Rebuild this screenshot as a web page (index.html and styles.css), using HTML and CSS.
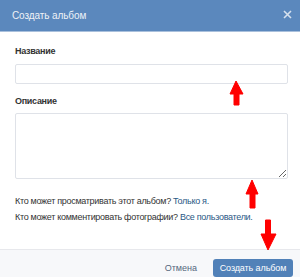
FILE: index.html
```html
<!DOCTYPE html>
<html lang="ru">
  <head>
    <meta charset="UTF-8" />
    <meta name="viewport" content="width=device-width, initial-scale=1.0" />
    <title>Создать альбом</title>
    <link rel="stylesheet" href="styles.css">
  </head>
  <body>
    <div class="box">
      <div class="box-header">
        <span class="box-title">Создать альбом</span>
        <svg class="box-close" width="9" height="9" viewBox="0 0 9 9">
          <path d="M1 1L8 8M8 1L1 8" stroke="#fff" stroke-opacity="0.75" stroke-width="1.6" />
        </svg>
      </div>

      <div class="box-body">
        <div class="label">Название</div>
        <input class="field" type="text" />

        <div class="label label-second">Описание</div>
        <textarea class="field area"></textarea>

        <div class="privacy">
          Кто может просматривать этот альбом? <a href="#">Только я.</a>
        </div>
        <div class="privacy">
          Кто может комментировать фотографии? <a href="#">Все пользователи.</a>
        </div>
      </div>

      <div class="box-footer">
        <button class="btn-cancel">Отмена</button>
        <button class="btn-create">Создать альбом</button>
      </div>

      <!-- red arrows drawn over the screenshot -->
      <svg class="arrows" width="300" height="277" viewBox="0 0 300 277">
        <path d="M236 81L243 94L239 94L239 105L234 105L234 94L230 94Z" fill="#f00" stroke="#f00" stroke-linejoin="round" />
        <path d="M252 180L258 194L255 194L255 208L250 208L250 194L246 194Z" fill="#f00" stroke="#f00" stroke-linejoin="round" />
        <path d="M268 250L276 234L270.5 234L270.5 220L265.5 220L265.5 234L261 234Z" fill="#f00" stroke="#f00" stroke-linejoin="round" />
      </svg>
    </div>
  </body>
</html>
```

FILE: styles.css
```css
body {
  margin: 0;
  font-family: "Liberation Sans", Arial, sans-serif;
  background: #fff;
  color: #222;
}
.box {
  position: relative;
  width: 300px;
  height: 277px;
  overflow: hidden;
}
.box-header {
  height: 31px;
  background: #5b88bd;
  border-bottom: 1px solid #a9c0dc;
  display: flex;
  align-items: center;
  justify-content: space-between;
  padding: 0 8px 0 12px;
}
.box-title {
  color: #eef2f7;
  font-size: 10px;
  letter-spacing: -0.1px;
}
.box-close {
  margin-bottom: 2px;
}
.box-body {
  padding: 12px 12px 0 15px;
}
.label {
  font-size: 9px;
  font-weight: bold;
  letter-spacing: -0.3px;
  color: #333;
  line-height: 14px;
  margin-bottom: 6px;
}
.label-second {
  margin-top: 10px;
  margin-bottom: 5px;
}
.field {
  display: block;
  box-sizing: border-box;
  width: 273px;
  height: 20px;
  margin: 0;
  border: 1px solid #dfe2e8;
  border-radius: 2px;
  background: #fff;
  font-family: inherit;
}
.area {
  height: 66px;
  resize: vertical;
}
.privacy {
  font-size: 9px;
  letter-spacing: -0.3px;
  line-height: 16px;
  color: #333;
}
.area + .privacy {
  margin-top: 14px;
}
.privacy a {
  color: #2a5885;
  text-decoration: none;
}
.box-footer {
  margin-top: 24px;
  border-top: 1px solid #e7e8ec;
  background: #f7f8fa;
  height: 40px;
  display: flex;
  justify-content: flex-end;
  align-items: flex-start;
  padding: 9px 7px 0 0;
  gap: 16px;
}
.btn-cancel {
  border: none;
  background: none;
  font-family: inherit;
  font-size: 9px;
  color: #55677d;
  height: 18px;
  padding: 0;
}
.btn-create {
  border: none;
  border-radius: 3px;
  background: #5181b8;
  color: #fff;
  font-family: inherit;
  font-size: 9px;
  letter-spacing: -0.1px;
  width: 80px;
  height: 18px;
  padding: 0;
}
.arrows {
  position: absolute;
  left: 0;
  top: 0;
  pointer-events: none;
}
```
